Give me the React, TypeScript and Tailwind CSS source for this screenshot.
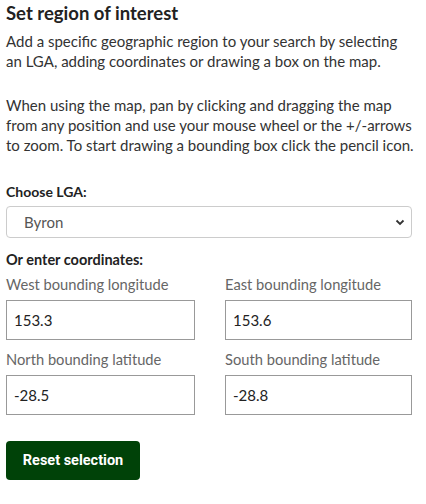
import React from "react";

export default function App() {
  return (
    <div className="w-[426px] h-[504px] bg-white px-[6px] pt-0 text-[#333]" style={{ fontFamily: 'Lato, "Liberation Sans", sans-serif' }}>
      <h2 className="text-[18.5px] font-bold leading-[26px] text-[#222]">Set region of interest</h2>
      <p className="mt-[5px] text-[15px] leading-[20px] text-[#333] whitespace-nowrap">
        Add a specific geographic region to your search by selecting
        <br />
        an LGA, adding coordinates or drawing a box on the map.
      </p>
      <p className="mt-[24px] text-[15px] leading-[20px] text-[#333] whitespace-nowrap">
        When using the map, pan by clicking and dragging the map
        <br />
        from any position and use your mouse wheel or the +/-arrows
        <br />
        to zoom. To start drawing a bounding box click the pencil icon.
      </p>
      <div className="mt-[27px] text-[14px] font-bold leading-[20px] text-[#222]">Choose LGA:</div>
      <div className="mt-[4px] h-[32px] w-[406px] rounded-[4px] border border-[#ccc] flex items-center justify-between pl-[17px] pr-[6px]">
        <span className="text-[15px] text-[#555]">Byron</span>
        <svg width="10" height="8" viewBox="0 0 10 8">
          <path d="M1.5 2.5 L5 6 L8.5 2.5" fill="none" stroke="#333" strokeWidth="1.8" />
        </svg>
      </div>
      <div className="mt-[12px] text-[14.5px] font-bold leading-[20px] text-[#222]">Or enter coordinates:</div>
      <div className="mt-[4px] grid grid-cols-[189px_187px] gap-x-[30px] gap-y-[9px]">
        <Field label="West bounding longitude" value="153.3" />
        <Field label="East bounding longitude" value="153.6" />
        <Field label="North bounding latitude" value="-28.5" />
        <Field label="South bounding latitude" value="-28.8" />
      </div>
      <button className="mt-[26px] h-[39px] w-[134px] rounded-[4px] bg-[#004208] text-white text-[14.5px] font-bold" style={{ fontFamily: 'Roboto, "Liberation Sans", sans-serif' }}>
        Reset selection
      </button>
    </div>
  );
}

function Field({ label, value }: { label: string; value: string }) {
  return (
    <div className="flex flex-col">
      <span className="text-[14.7px] leading-[20px] text-[#666]">{label}</span>
      <div className="mt-[6px] h-[40px] border border-[#999] flex items-center px-[7px] text-[15px] text-[#222]">{value}</div>
    </div>
  );
}
